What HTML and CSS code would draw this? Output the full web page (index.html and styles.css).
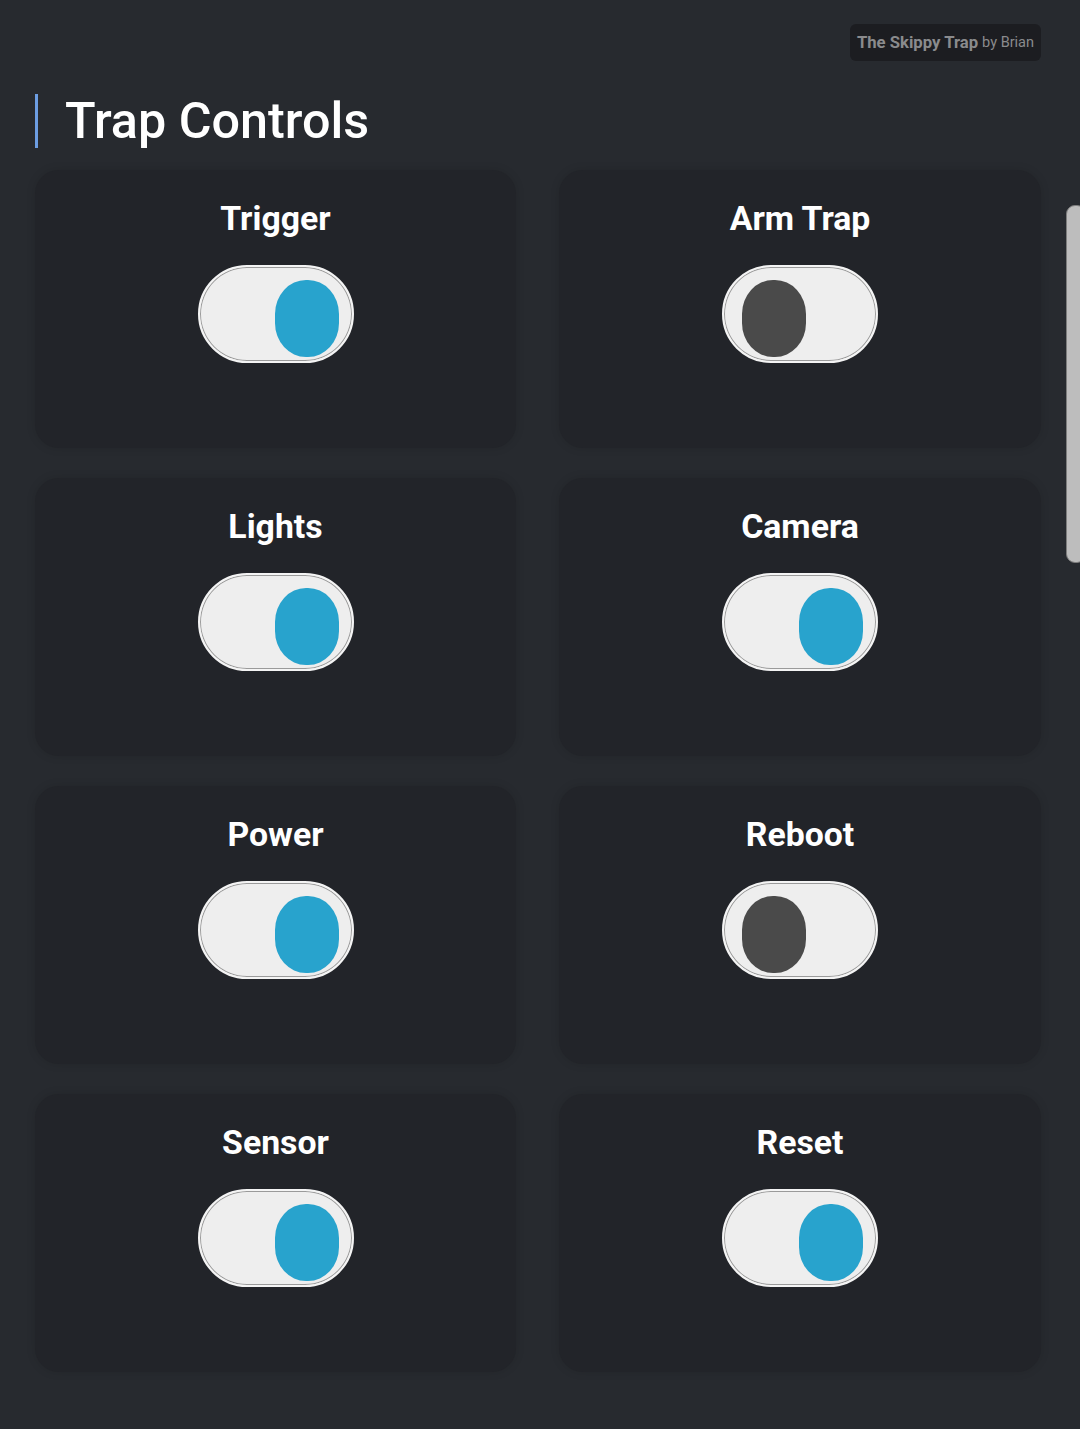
FILE: index.html
```html
<!DOCTYPE html>
<html>
<head>
<meta charset="utf-8">
<link rel="stylesheet" href="styles.css">
</head>
<body>
<div class="page">
  <div class="topbar">
    <div class="badge"><span class="badge-name">The Skippy Trap</span> <span class="badge-by">by Brian</span></div>
  </div>
  <h1 class="title">Trap Controls</h1>
  <div class="grid">
    <div class="card"><div class="card-title">Trigger</div><div class="toggle on"><div class="knob"></div></div></div>
    <div class="card"><div class="card-title">Arm Trap</div><div class="toggle"><div class="knob"></div></div></div>
    <div class="card"><div class="card-title">Lights</div><div class="toggle on"><div class="knob"></div></div></div>
    <div class="card"><div class="card-title">Camera</div><div class="toggle on"><div class="knob"></div></div></div>
    <div class="card"><div class="card-title">Power</div><div class="toggle on"><div class="knob"></div></div></div>
    <div class="card"><div class="card-title">Reboot</div><div class="toggle"><div class="knob"></div></div></div>
    <div class="card"><div class="card-title">Sensor</div><div class="toggle on"><div class="knob"></div></div></div>
    <div class="card"><div class="card-title">Reset</div><div class="toggle on"><div class="knob"></div></div></div>
  </div>
</div>
<div class="scroll-thumb"></div>
</body>
</html>
```

FILE: styles.css
```css
html, body {
  margin: 0;
  padding: 0;
  background: #272a2f;
  font-family: Roboto, "Liberation Sans", sans-serif;
  color: #ffffff;
}
.page {
  padding: 24px 39px 40px 35px;
}
.topbar {
  display: flex;
  justify-content: flex-end;
}
.badge {
  height: 37px;
  box-sizing: border-box;
  padding: 0 7px;
  display: flex;
  align-items: center;
  gap: 4px;
  background: #1c1d21;
  border-radius: 6px;
  white-space: nowrap;
}
.badge-name {
  font-weight: 700;
  font-size: 16.7px;
  color: #8a8b8d;
}
.badge-by {
  font-size: 14.5px;
  color: #8a8b8d;
}
.title {
  margin: 33px 0 22px 0;
  border-left: 3px solid #6c9de2;
  padding-left: 27px;
  font-weight: 500;
  font-size: 50.3px;
  line-height: 54px;
  color: #ffffff;
}
.grid {
  display: grid;
  grid-template-columns: 481px 482px;
  column-gap: 43px;
  row-gap: 30px;
}
.card {
  height: 278px;
  box-sizing: border-box;
  background: #222429;
  border-radius: 24px;
  box-shadow: 0 0 10px rgba(0,0,0,0.12);
  padding-top: 30px;
  display: flex;
  flex-direction: column;
  align-items: center;
}
.card-title {
  font-weight: 700;
  font-size: 33.8px;
  line-height: 38px;
  color: #ffffff;
}
.toggle {
  margin-top: 27px;
  width: 156px;
  height: 98px;
  box-sizing: border-box;
  border-radius: 49px;
  background: #eeeeee;
  border: 2px solid #f4f4f4;
  box-shadow: inset 0 0 0 1px #9a9a9a;
  position: relative;
}
.knob {
  position: absolute;
  top: 13px;
  left: 18px;
  width: 64px;
  height: 77px;
  border-radius: 31px / 34px;
  background: #4a4a4a;
}
.toggle.on .knob {
  left: auto;
  right: 13px;
  background: #28a3cd;
}
.scroll-thumb {
  position: absolute;
  top: 205px;
  right: -6px;
  width: 20px;
  height: 358px;
  box-sizing: border-box;
  background: #bdbdbd;
  border: 1px solid #7d7d7d;
  border-radius: 9px;
}
```
